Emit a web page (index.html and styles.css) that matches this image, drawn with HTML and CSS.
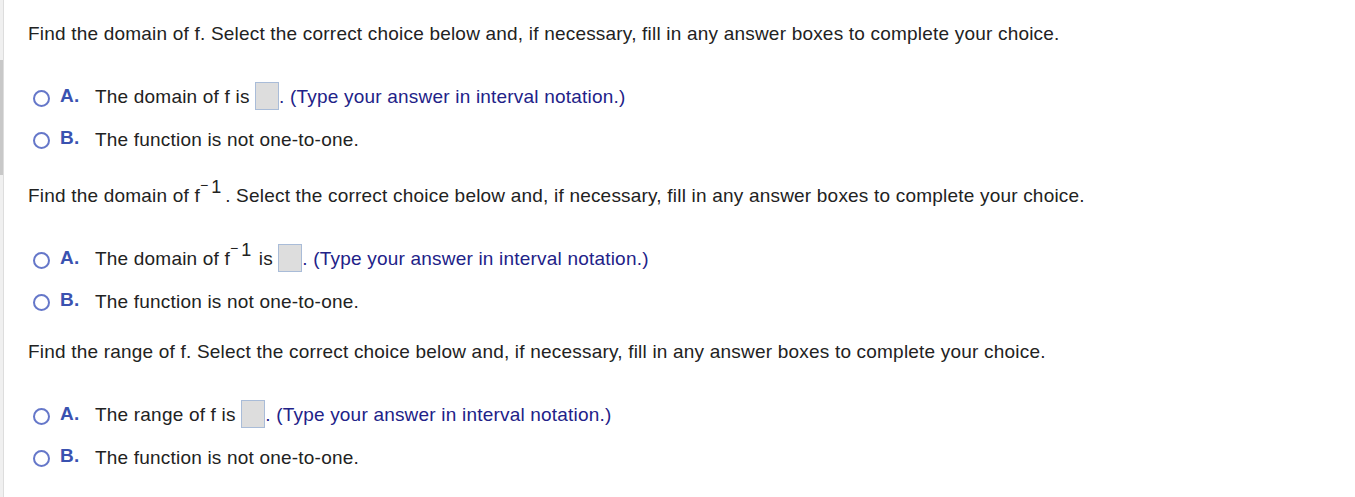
FILE: index.html
```html
<!DOCTYPE html>
<html lang="en">
<head>
    <meta charset="UTF-8">
    <title>Inverse Functions</title>
    <link rel="stylesheet" href="styles.css">
</head>
<body>

<div class="page">
    <div class="side-rail"><div class="rail-thumb"></div></div>

    <div class="content">
        <div class="part">
            <p class="prompt">Find the domain of f. Select the correct choice below and, if necessary, fill in any answer boxes to complete your choice.</p>
            <div class="choices">
                <div class="choice">
                    <span class="radio"></span>
                    <span class="letter">A.</span>
                    <span class="choice-text">The domain of f is <span class="answer-box"></span><span class="hint">. (Type your answer in interval notation.)</span></span>
                </div>
                <div class="choice">
                    <span class="radio"></span>
                    <span class="letter">B.</span>
                    <span class="choice-text">The function is not one-to-one.</span>
                </div>
            </div>
        </div>

        <div class="part">
            <p class="prompt with-exp">Find the domain of f<sup><span class="neg">&minus;</span>1</sup>. Select the correct choice below and, if necessary, fill in any answer boxes to complete your choice.</p>
            <div class="choices">
                <div class="choice">
                    <span class="radio"></span>
                    <span class="letter">A.</span>
                    <span class="choice-text">The domain of f<sup class="tight"><span class="neg">&minus;</span>1</sup> is <span class="answer-box"></span><span class="hint">. (Type your answer in interval notation.)</span></span>
                </div>
                <div class="choice">
                    <span class="radio"></span>
                    <span class="letter">B.</span>
                    <span class="choice-text">The function is not one-to-one.</span>
                </div>
            </div>
        </div>

        <div class="part">
            <p class="prompt">Find the range of f. Select the correct choice below and, if necessary, fill in any answer boxes to complete your choice.</p>
            <div class="choices">
                <div class="choice">
                    <span class="radio"></span>
                    <span class="letter">A.</span>
                    <span class="choice-text">The range of f is <span class="answer-box"></span><span class="hint">. (Type your answer in interval notation.)</span></span>
                </div>
                <div class="choice">
                    <span class="radio"></span>
                    <span class="letter">B.</span>
                    <span class="choice-text">The function is not one-to-one.</span>
                </div>
            </div>
        </div>
    </div>
</div>

</body>
</html>
```

FILE: styles.css
```css
body {
    margin: 0;
    padding: 0;
    background: #ffffff;
    font-family: "Liberation Sans", Arial, sans-serif;
    color: #222222;
}

.page {
    display: flex;
    min-height: 497px;
}

.side-rail {
    width: 3px;
    background: #f0f0f0;
    border-right: 1px solid #dddddd;
    padding-top: 60px;
}

.rail-thumb {
    height: 115px;
    background: #c8c8c8;
}

.content {
    padding: 23px 0 0 24px;
    font-size: 19px;
    letter-spacing: 0.2px;
}

.prompt {
    margin: 0;
    line-height: 22px;
}

.prompt.with-exp {
    padding-top: 6px;
}

.choices {
    display: flex;
    flex-direction: column;
    gap: 12px;
    padding: 38px 0 0 5px;
}

.part {
    margin-bottom: 24px;
}

.choice {
    display: flex;
    align-items: center;
    height: 30px;
}

.radio {
    flex: none;
    width: 13px;
    height: 13px;
    border: 2px solid #6577c9;
    border-radius: 50%;
    margin-right: 10px;
}

.letter {
    flex: none;
    color: #3a52b0;
    font-weight: bold;
    width: 35px;
    position: relative;
    top: -2px;
}

.choice-text {
    white-space: nowrap;
}

.answer-box {
    display: inline-block;
    vertical-align: middle;
    width: 22px;
    height: 26px;
    background: #dddddd;
    border: 1px solid #a9bcd8;
    margin-top: -4px;
}

.hint {
    color: #222288;
}

/* exponent of f: short raised minus, then a full-size 1 */
sup {
    font-size: 18px;
    vertical-align: baseline;
    position: relative;
    top: -9px;
    line-height: 0;
    letter-spacing: 0;
    margin-right: 4px;
}

sup.tight {
    margin-right: 2px;
}

.neg {
    font-size: 14px;
    position: relative;
    top: -3px;
    margin-right: 3px;
}
```
